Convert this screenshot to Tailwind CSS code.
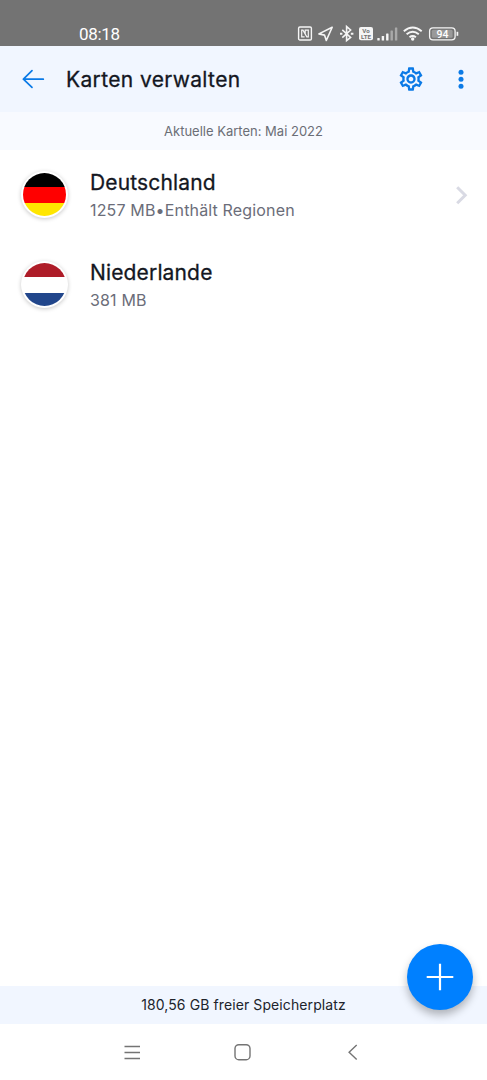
<!DOCTYPE html>
<html lang="de">
<head>
<meta charset="utf-8">
<meta name="viewport" content="width=device-width, initial-scale=1">
<title>Karten verwalten</title>
<script src="https://cdn.jsdelivr.net/npm/@tailwindcss/browser@4"></script>
</head>
<body class="relative flex h-[1080px] w-[487px] flex-col overflow-hidden bg-white font-['Inter',sans-serif] text-[#14171f]">
  <!-- Status bar -->
  <div class="flex h-[46px] shrink-0 items-start bg-[#737373] pl-[79px] pt-[24px] text-white">
    <span class="w-[218px] font-['Roboto',sans-serif] text-[17px] leading-5 tracking-[-0.3px]">08:18</span>
    <svg width="165" height="20" viewBox="0 0 165 20" fill="none" stroke="#f5f5f5">
      <rect x="1.6" y="3" width="12.8" height="13" rx="1.3" stroke-width="1.4"/>
      <path d="M7.6 12.9H4.7V6.2H6l3.8 6.7h1.5V6.2H8.2V10" stroke-width="1.2"/>
      <path d="M35.2 3.2L21.9 9.9l5.6 1.2 1.8 5.4z" stroke-width="1.6" stroke-linejoin="round"/>
      <path d="M45.3 5.8l8.3 7.6-4 3.2V2.6l4 3.4-8.3 7.6" stroke-width="1.6"/>
      <path d="M43 9.7h2.4M53.8 9.7h2.6" stroke-width="2"/>
      <rect x="62" y="3" width="14" height="13.2" rx="2" fill="#f5f5f5" stroke="none"/>
      <g fill="#737373" stroke="none" font-family="Roboto" font-weight="700" text-anchor="middle"><text x="69" y="9" font-size="6.2">Vo</text><text x="69" y="15" font-size="6.2">LTE</text></g>
      <g fill="#f5f5f5" stroke="none"><rect x="80.3" y="14" width="2.4" height="2.5" rx=".5"/><rect x="84.7" y="12" width="2.4" height="4.5" rx=".5"/><rect x="89.1" y="9.5" width="2.4" height="7" rx=".5"/><g opacity=".42"><rect x="93.5" y="6.5" width="2.4" height="10" rx=".5"/><rect x="97.9" y="3.5" width="2.4" height="13" rx=".5"/></g></g>
      <path d="M106.8 7.2Q115.7-.2 124.7 7.2M109.6 10.2Q115.7 5.2 121.8 10.2M112.5 13.2Q115.7 10.7 118.9 13.2" stroke-width="1.9"/>
      <circle cx="115.7" cy="15" r="1.7" fill="#f5f5f5" stroke="none"/>
      <rect x="132.6" y="3.8" width="25.5" height="12" rx="3.4" stroke-width="1.3"/>
      <rect x="134.8" y="5.8" width="20.8" height="8" rx="1.5" fill="#999" stroke="none"/>
      <path d="M160.4 7.8v4" stroke-width="1.7"/>
      <text x="145.4" y="13.5" font-family="Roboto" font-size="10.5" font-weight="500" text-anchor="middle" fill="#fff" stroke="none">94</text>
    </svg>
  </div>

  <!-- App bar -->
  <header class="flex h-[66px] shrink-0 items-center bg-[#f1f6ff] pl-[21px] pr-[14px] text-[#0b7ae6]">
    <svg class="shrink-0" width="24" height="24" viewBox="0 0 24 24" fill="none" stroke="currentColor" stroke-width="1.7" stroke-linecap="round" stroke-linejoin="round"><path d="M22.3 12.2H2.4M11 3.7L2.4 12.2l8.6 8.2"/></svg>
    <h1 class="ml-[21px] flex-1 whitespace-nowrap pt-[1px] text-[21px] font-normal leading-7 tracking-[0.36px] text-[#14171f] [-webkit-text-stroke:0.3px_#14171f]">Karten verwalten</h1>
    <svg width="28" height="28" viewBox="0 0 24 24" fill="currentColor"><path d="M19.43 12.98c.04-.32.07-.64.07-.98s-.03-.66-.07-.98l2.11-1.65c.19-.15.24-.42.12-.64l-2-3.46c-.09-.16-.26-.25-.44-.25-.06 0-.12.01-.17.03l-2.49 1c-.52-.4-1.08-.73-1.69-.98l-.38-2.65C14.46 2.18 14.25 2 14 2h-4c-.25 0-.46.18-.49.42l-.38 2.65c-.61.25-1.17.59-1.69.98l-2.49-1c-.06-.02-.12-.03-.18-.03-.17 0-.34.09-.43.25l-2 3.46c-.13.22-.07.49.12.64l2.11 1.65c-.04.32-.07.65-.07.98s.03.66.07.98l-2.11 1.65c-.19.15-.24.42-.12.64l2 3.46c.09.16.26.25.44.25.06 0 .12-.01.17-.03l2.49-1c.52.4 1.08.73 1.69.98l.38 2.65c.03.24.24.42.49.42h4c.25 0 .46-.18.49-.42l.38-2.65c.61-.25 1.17-.59 1.69-.98l2.49 1c.06.02.12.03.18.03.17 0 .34-.09.43-.25l2-3.46c.12-.22.07-.49-.12-.64l-2.11-1.65zm-1.98-1.71c.04.31.05.52.05.73s-.02.43-.05.73l-.14 1.13.89.7 1.08.84-.7 1.21-1.27-.51-1.04-.42-.9.68c-.43.32-.84.56-1.25.73l-1.06.43-.16 1.13-.2 1.35h-1.4l-.19-1.35-.16-1.13-1.06-.43c-.43-.18-.83-.41-1.23-.71l-.91-.7-1.06.43-1.27.51-.7-1.21 1.08-.84.89-.7-.14-1.13c-.03-.31-.05-.54-.05-.74s.02-.43.05-.73l.14-1.13-.89-.7-1.08-.84.7-1.21 1.27.51 1.04.42.9-.68c.43-.32.84-.56 1.25-.73l1.06-.43.16-1.13.2-1.35h1.39l.19 1.35.16 1.13 1.06.43c.43.18.83.41 1.23.71l.91.7 1.06-.43 1.27-.51.7 1.21-1.07.85-.89.7.14 1.13zM12 8c-2.21 0-4 1.79-4 4s1.79 4 4 4 4-1.79 4-4-1.79-4-4-4zm0 6c-1.1 0-2-.9-2-2s.9-2 2-2 2 .9 2 2-.9 2-2 2z"/></svg>
    <svg class="ml-[24px]" width="24" height="28" viewBox="0 0 24 28" fill="currentColor"><circle cx="12" cy="7.3" r="2.5"/><circle cx="12" cy="14.3" r="2.5"/><circle cx="12" cy="21.3" r="2.5"/></svg>
  </header>
  <div class="flex h-[38px] shrink-0 items-center justify-center bg-[#f8faff] pt-[2px] text-[13px] text-[#6b6e76]"><span>Aktuelle Karten: Mai 2022</span></div>

  <!-- Map list -->
  <main class="flex-1">
    <div class="flex h-[90px] items-center pl-[21px] pr-[14px]">
      <div class="mb-[1px] h-[47px] w-[47px] shrink-0 rounded-full bg-white p-[2px] shadow-[0_1px_4px_rgba(0,0,0,0.22)]">
        <div class="flex h-full flex-col overflow-hidden rounded-full"><div class="flex-1 bg-black"></div><div class="h-[16px] bg-[#ff0000]"></div><div class="flex-1 bg-[#ffe600]"></div></div>
      </div>
      <div class="ml-[22px] flex-1 whitespace-nowrap pt-[3px]">
        <div class="text-[21px] font-normal leading-7 tracking-[0.15px] [-webkit-text-stroke:0.3px_#14171f]">Deutschland</div>
        <div class="-mt-px text-[16px] leading-7 tracking-[0.16px] text-[#6b6d79]">1257 MB•Enthält Regionen</div>
      </div>
      <svg width="24" height="24" viewBox="0 0 24 24" fill="none" stroke="#d9dae4" stroke-width="3"><path d="M8.2 4.2l8 8-8 8"/></svg>
    </div>
    <div class="flex h-[90px] items-center pl-[21px] pr-[14px]">
      <div class="mb-[1px] h-[47px] w-[47px] shrink-0 rounded-full bg-white p-[2px] shadow-[0_1px_4px_rgba(0,0,0,0.22)]">
        <div class="flex h-full flex-col overflow-hidden rounded-full"><div class="flex-1 bg-[#ae1c28]"></div><div class="h-[16px] bg-white"></div><div class="flex-1 bg-[#21468b]"></div></div>
      </div>
      <div class="ml-[22px] flex-1 whitespace-nowrap pt-[3px]">
        <div class="text-[21px] font-normal leading-7 tracking-[0.15px] [-webkit-text-stroke:0.3px_#14171f]">Niederlande</div>
        <div class="-mt-px text-[16px] leading-7 tracking-[0.16px] text-[#6b6d79]">381 MB</div>
      </div>
    </div>
  </main>

  <!-- Storage summary -->
  <footer class="flex h-[38px] shrink-0 items-center justify-center bg-[#f1f6ff] pb-[2px] text-[14px] tracking-[0.1px] text-[#20232b]"><span>180,56 GB freier Speicherplatz</span></footer>

  <!-- System navigation -->
  <nav class="flex h-[56px] shrink-0 justify-center text-[#747474]">
    <svg width="261" height="56" viewBox="0 0 261 56" fill="none" stroke="currentColor" stroke-width="1.4"><path d="M11.5 22.5H27M11.5 28.5H27M11.5 34.5H27"/><rect x="122" y="20.7" width="15" height="15" rx="3.8"/><path d="M243.7 21l-7.6 7.2 7.6 7.4"/></svg>
  </nav>

  <button aria-label="Karte hinzufügen" class="absolute left-[406.5px] top-[944px] flex h-[66px] w-[66px] items-center justify-center rounded-full bg-[#0080ff] shadow-[0_5px_9px_rgba(0,0,0,0.28)]">
    <svg width="28" height="28" viewBox="0 0 28 28" stroke="#fff" stroke-width="2.2"><path d="M14 .7v26.6M.7 14h26.6"/></svg>
  </button>
</body>
</html>
